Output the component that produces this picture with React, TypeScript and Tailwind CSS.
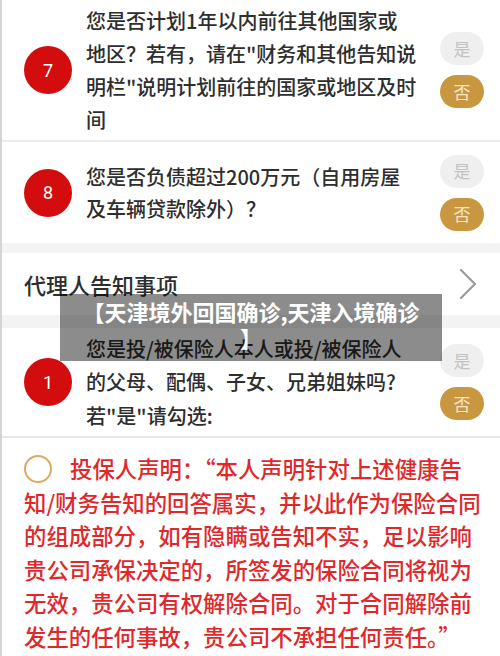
import React from 'react';

const cjk = "font-['Noto_Sans_CJK_SC','Noto_Sans',sans-serif]";

type QuestionProps = {
  num: string;
  lines: string[];
  leading: string;
  height: string;
};

function Question({ num, lines, leading, height }: QuestionProps) {
  return (
    <div className={`flex items-center pl-[22px] pr-[16px] ${height}`}>
      <div className="flex h-12 w-12 shrink-0 items-center justify-center rounded-full bg-[#d30d0d] text-[18px] text-white font-['Roboto',sans-serif]">
        {num}
      </div>
      <div className={`ml-[14px] flex-1 text-[20px] font-medium text-[#2e2e2e] ${leading}`}>
        {lines.map((line, i) => (
          <div key={i} className="whitespace-nowrap">
            {line}
          </div>
        ))}
      </div>
      <div className="flex w-[44px] shrink-0 flex-col gap-[10px]">
        <div className="flex h-[33px] items-center justify-center rounded-full bg-[#efefef] text-[17px] text-[#c2c2c2]">
          是
        </div>
        <div className="flex h-[33px] items-center justify-center rounded-full bg-[#c9973f] text-[17px] text-[#f6e6c6]">
          否
        </div>
      </div>
    </div>
  );
}

export default function App() {
  const statement = [
    '知/财务告知的回答属实，并以此作为保险合同',
    '的组成部分，如有隐瞒或告知不实，足以影响',
    '贵公司承保决定的，所签发的保险合同将视为',
    '无效，贵公司有权解除合同。对于合同解除前',
    '发生的任何事故，贵公司不承担任何责任。”',
  ];

  return (
    <div className={`relative h-[656px] w-[500px] overflow-hidden border-l-2 border-[#d4d4d4] bg-white ${cjk}`}>
      <Question
        num="7"
        height="h-[140px]"
        leading="leading-[33px]"
        lines={[
          '您是否计划1年以内前往其他国家或',
          '地区？若有，请在"财务和其他告知说',
          '明栏"说明计划前往的国家或地区及时',
          '间',
        ]}
      />
      <div className="h-[2px] bg-[#ececec]" />
      <Question
        num="8"
        height="h-[101px]"
        leading="leading-[32px]"
        lines={['您是否负债超过200万元（自用房屋', '及车辆贷款除外）？']}
      />
      <div className="h-[10px] bg-[#f3f3f3]" />

      <div className="flex h-[62px] items-center justify-between pl-[22px] pr-[22px]">
        <span className="text-[22px] font-medium text-[#2e2e2e]">代理人告知事项</span>
        <svg width="20" height="32" viewBox="0 0 20 32" fill="none">
          <polyline points="3,2 17,16 3,30" stroke="#9a9a9a" strokeWidth="2.2" strokeLinejoin="round" strokeLinecap="round" />
        </svg>
      </div>
      <div className="h-[13px] bg-[#f3f3f3]" />

      <Question
        num="1"
        height="h-[108px]"
        leading="leading-[33.5px]"
        lines={['您是投/被保险人本人或投/被保险人', '的父母、配偶、子女、兄弟姐妹吗?', '若"是"请勾选:']}
      />
      <div className="h-[2px] bg-[#e8e8e8]" />

      <div className="pl-[22px] pt-[14px] text-[22.4px] font-medium leading-[33.6px] text-[#e0282b]">
        <div className="flex items-center whitespace-nowrap">
          <span className="mr-[18px] inline-block h-[28px] w-[28px] rounded-full border-2 border-[#dcab62]" />
          <span>投保人声明：“本人声明针对上述健康告</span>
        </div>
        {statement.map((line, i) => (
          <div key={i} className="whitespace-nowrap">
            {line}
          </div>
        ))}
      </div>

      <div className="absolute left-[58px] top-[294px] flex h-[67px] w-[382px] items-center justify-center bg-black/45 pb-[7px]">
        <p className="text-center text-[22px] font-bold leading-[26px] text-white">
          【天津境外回国确诊,天津入境确诊
          <br />】
        </p>
      </div>
    </div>
  );
}
